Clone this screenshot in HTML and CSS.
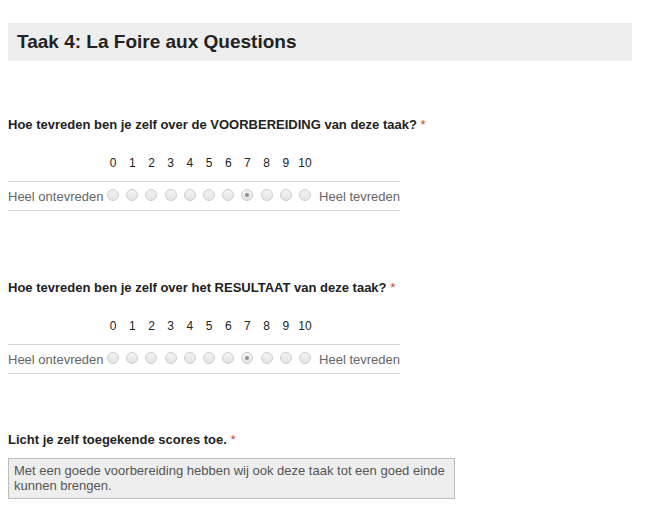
FILE: index.html
```html
<!DOCTYPE html>
<html lang="nl">
<head>
<meta charset="utf-8">
<title>Taak 4</title>
<link rel="stylesheet" href="styles.css">
</head>
<body>
<div class="page">
  <h1 class="title">Taak 4: La Foire aux Questions</h1>

  <div class="question q1">
    <div class="label">Hoe tevreden ben je zelf over de VOORBEREIDING van deze taak? <span class="req">*</span></div>
    <div class="scale">
      <div class="nums">
        <span></span>
        <span>0</span><span>1</span><span>2</span><span>3</span><span>4</span><span>5</span><span>6</span><span>7</span><span>8</span><span>9</span><span>10</span>
        <span></span>
      </div>
      <div class="radios">
        <span class="end-l">Heel ontevreden</span>
        <span class="cell"><i class="radio"></i></span>
        <span class="cell"><i class="radio"></i></span>
        <span class="cell"><i class="radio"></i></span>
        <span class="cell"><i class="radio"></i></span>
        <span class="cell"><i class="radio"></i></span>
        <span class="cell"><i class="radio"></i></span>
        <span class="cell"><i class="radio"></i></span>
        <span class="cell"><i class="radio checked"></i></span>
        <span class="cell"><i class="radio"></i></span>
        <span class="cell"><i class="radio"></i></span>
        <span class="cell"><i class="radio"></i></span>
        <span class="end-r">Heel tevreden</span>
      </div>
    </div>
  </div>

  <div class="question q2">
    <div class="label">Hoe tevreden ben je zelf over het RESULTAAT van deze taak? <span class="req">*</span></div>
    <div class="scale">
      <div class="nums">
        <span></span>
        <span>0</span><span>1</span><span>2</span><span>3</span><span>4</span><span>5</span><span>6</span><span>7</span><span>8</span><span>9</span><span>10</span>
        <span></span>
      </div>
      <div class="radios">
        <span class="end-l">Heel ontevreden</span>
        <span class="cell"><i class="radio"></i></span>
        <span class="cell"><i class="radio"></i></span>
        <span class="cell"><i class="radio"></i></span>
        <span class="cell"><i class="radio"></i></span>
        <span class="cell"><i class="radio"></i></span>
        <span class="cell"><i class="radio"></i></span>
        <span class="cell"><i class="radio"></i></span>
        <span class="cell"><i class="radio checked"></i></span>
        <span class="cell"><i class="radio"></i></span>
        <span class="cell"><i class="radio"></i></span>
        <span class="cell"><i class="radio"></i></span>
        <span class="end-r">Heel tevreden</span>
      </div>
    </div>
  </div>

  <div class="question q3">
    <div class="label">Licht je zelf toegekende scores toe. <span class="req">*</span></div>
    <div class="answer">Met een goede voorbereiding hebben wij ook deze taak tot een goed einde kunnen brengen.</div>
  </div>
</div>
</body>
</html>
```

FILE: styles.css
```css
html, body {
  margin: 0;
  padding: 0;
  background: #fff;
}
body {
  font-family: "Liberation Sans", Arial, sans-serif;
  color: #222;
}
.page {
  padding: 23px 13px 0 8px;
}
.title {
  margin: 0;
  height: 38px;
  line-height: 38px;
  background: #eeeeee;
  padding: 0 9px;
  font-size: 19px;
  font-weight: bold;
  color: #222;
}
.q1 { margin-top: 56px; }
.q2 { margin-top: 69px; }
.q3 { margin-top: 58px; }
.label {
  font-size: 13px;
  line-height: 16px;
  font-weight: bold;
  color: #222;
  white-space: nowrap;
}
.req {
  color: #c9453b;
  font-weight: normal;
}
.scale {
  width: 392px;
  margin-top: 19px;
}
.nums, .radios {
  display: grid;
  grid-template-columns: 95.5px repeat(11, 19.2px) 1fr;
}
.nums {
  height: 29px;
  box-sizing: border-box;
  padding-bottom: 11px;
  align-items: end;
  font-size: 12px;
  line-height: 14px;
  color: #222;
  text-align: center;
}
.radios {
  height: 28px;
  align-items: center;
  border-top: 1px solid #d6d6d6;
  border-bottom: 1px solid #d6d6d6;
  font-size: 13px;
  color: #666;
}
.end-l { text-align: left; }
.end-r { text-align: right; }
.cell {
  display: flex;
  justify-content: center;
  align-items: center;
  height: 100%;
  padding-bottom: 3px;
  box-sizing: border-box;
}
.radio {
  display: block;
  width: 10px;
  height: 10px;
  border: 1px solid #cdcdcd;
  border-radius: 50%;
  background: linear-gradient(#f3f3f3, #e4e4e4);
  position: relative;
}
.radio.checked::after {
  content: "";
  position: absolute;
  left: 3px;
  top: 3px;
  width: 4px;
  height: 4px;
  border-radius: 50%;
  background: #8f8f8f;
}
.answer {
  width: 435px;
  margin-top: 10px;
  border: 1px solid #bdbdbd;
  background: #eeeeee;
  padding: 4px 5px 5px 5px;
  font-size: 13px;
  line-height: 15px;
  color: #555;
}
```
